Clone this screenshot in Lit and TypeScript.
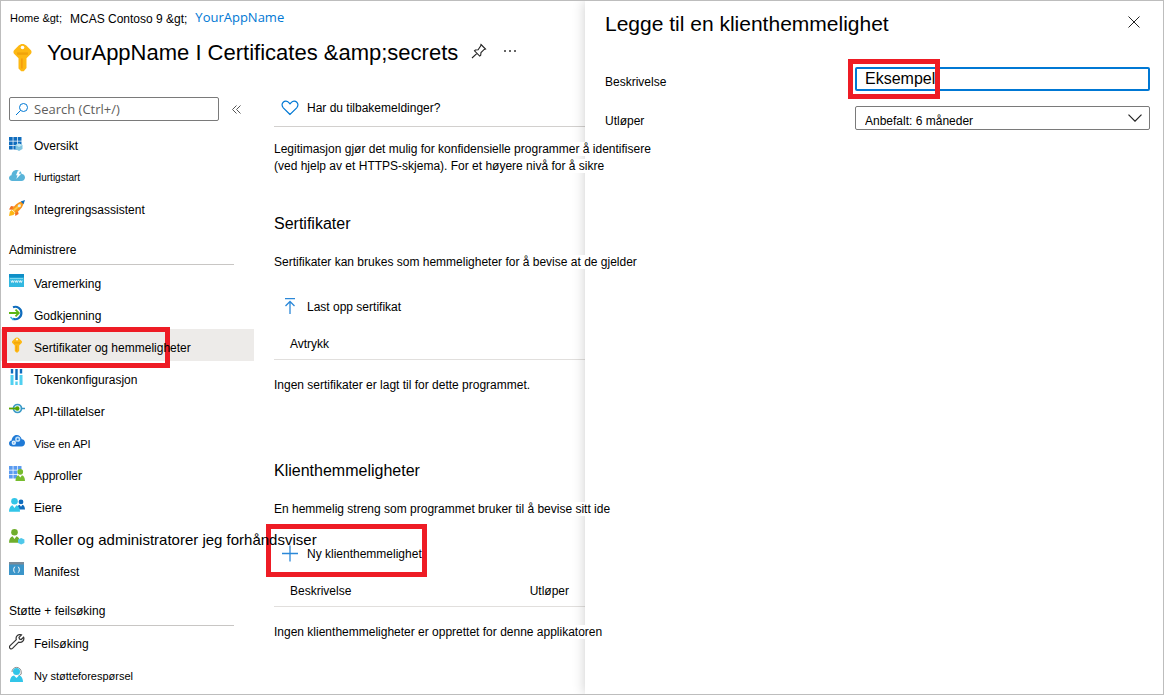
import { LitElement, html, css, svg, nothing, TemplateResult } from "lit";
import { customElement, property } from "lit/decorators.js";

const KEY = svg`
  <path d="M8 .5c.8 0 1.500.3 2.100.9l2.300 2.300c.8.8.8 1.700 0 2.500L10.200 8.400v5.400L8.700 15.600H7.300L5.800 14V8.400L3.600 6.200c-.8-.8-.8-1.700 0-2.500l2.300-2.300C6.500.8 7.200.5 8 .5z" fill="#fdb813"/>
  <path d="M5 5.200h6v1.300H5z" fill="#f0a30a"/>
  <path d="M7.200 8.500h.9v5.500h-.9z" fill="#f59d0e"/>
  <circle cx="8" cy="2.500" r="1" fill="#fff"/>`;

const PERSON = (x: number, y: number, s: number, color: string) => svg`
  <g transform="translate(${x} ${y}) scale(${s})" fill="${color}">
    <circle cx="5" cy="3" r="3"/><path d="M0 12.500C0 9 1.500 6.800 3.200 6.500L5 9l1.800-2.500C8.500 6.800 10 9 10 12.500z"/>
  </g>`;

const GRID = (color: string) => svg`
  <g fill="${color}">
    <path d="M0 1h3.700v3.700H0zM4.400 1h3.700v3.700H4.400zM8.800 1h3.700v3.700H8.800zM0 5.400h3.700v3.700H0zM4.400 5.400h3.700v3.700H4.400zM8.800 5.400h3.700v3.700H8.800zM0 9.800h3.700v3.700H0zM4.400 9.800h3.700v3.700H4.400z"/>
  </g>`;

const ICONS: Record<string, TemplateResult> = {
  overview: svg`${GRID("#0f6cbd")}
    <path d="M10 7.500l3.500 1.600v4L10 15l-3.500-1.900v-4z" fill="#7fc4e0"/>
    <path d="M10 7.500l3.500 1.600L10 11 6.500 9.100z" fill="#c0e6f2"/>`,
  quickstart: svg`
    <path d="M3.300 13C1.400 13 0 11.800 0 10.100c0-1.500 1-2.600 2.500-2.800C2.700 4.200 4.800 2 7.800 2c2.500 0 4.400 1.600 4.900 4 2 .1 3.300 1.700 3.300 3.600S14.500 13 12.500 13z" fill="#59b4d9"/>
    <path d="M9 2.500h2.500L9.800 5.800h2.400L7.300 11l1.200-3.700H7z" fill="#fff"/>`,
  rocket: svg`
    <path d="M5 6.500L2 6 0 9.500l3.500.2zM9 11l.6 3L6.300 16l-.3-3.500z" fill="#f37021"/>
    <path d="M2.500 10L.8 11.800 0 16l4.500-1L6 13z" fill="#fdb813"/>
    <path d="M15 1C10.500 1.500 6.500 3.500 3 9.300l3.700 3.700C12.500 9.500 14.500 5.500 15 1z" fill="#f7941d"/>
    <path d="M4.500 10.800L12 4" stroke="#ffc83d" stroke-width="2"/>
    <path d="M11.700 1.500L16 0l-1.500 4.300z" fill="#0f6cbd"/><circle cx="10.300" cy="5.700" r="1.500" fill="#dff3fb"/>`,
  branding: svg`
    <path d="M0 1h15v13H0z" fill="#32b8e0"/><path d="M0 1h15v3.500H0z" fill="#0f8fc7"/>
    <path d="M1 5h13v.7H1z" fill="#9be4f7"/>
    <path d="M2 7.500l.8 2 .8-2 .8 2 .8-2M6 7.500l.8 2 .8-2 .8 2 .8-2M10 7.500l.8 2 .8-2 .8 2 .8-2" fill="none" stroke="#fff" stroke-width=".8"/>`,
  auth: svg`
    <path d="M4 2.200A6.200 6.200 0 1 1 4 13.800" fill="none" stroke="#0f6cbd" stroke-width="2.200"/>
    <path d="M0 8h9.500M6.500 4.700L9.800 8l-3.300 3.300" fill="none" stroke="#5cb615" stroke-width="1.800"/>
    <path d="M1.500 12l3 3" stroke="#32b8e0" stroke-width="1.500"/>`,
  key: KEY,
  token: svg`
    <path d="M3 6v10M12 6v10" stroke="#50d0f0" stroke-width="3"/>
    <path d="M3 0v4.500M12 0v4.500M7.500 0v11" stroke="#0f6cbd" stroke-width="2.400"/>
    <path d="M7.500 12.500V16" stroke="#50d0f0" stroke-width="2.400"/>`,
  permissions: svg`
    <circle cx="8.500" cy="7.500" r="4" fill="#e8f6fb" stroke="#3999c6" stroke-width="1.700"/>
    <path d="M12.500 7.500H16" stroke="#3999c6" stroke-width="1.500"/>
    <path d="M0 7.500h7" stroke="#57a300" stroke-width="1.800"/><circle cx="8.300" cy="7.500" r="2.200" fill="#57a300"/>`,
  expose: svg`
    <path d="M3.500 13.500C1.500 13.500 0 12.300 0 10.500c0-1.600 1-2.700 2.600-2.900C2.800 4.500 4.900 2 7.700 2c2.500 0 4.300 1.700 5 4.300 2 .1 3.300 1.600 3.300 3.500 0 2.100-1.500 3.700-3.700 3.700z" fill="#1f7ad6"/>
    <circle cx="8.700" cy="6.200" r="1.800" fill="none" stroke="#bfe0fa" stroke-width="1.600"/>
    <circle cx="4.800" cy="9.800" r="1.400" fill="none" stroke="#dff0fd" stroke-width="1.600"/>`,
  approles: svg`${GRID("#5a9bf0")}${PERSON(6.5, 4, 0.95, "#76bc2d")}`,
  owners: svg`${PERSON(8, 2.5, 0.8, "#0f6cbd")}${PERSON(0, 1, 1.1, "#32c5e8")}`,
  roles: svg`${PERSON(0, 0, 1.1, "#6fae2c")}
    <path d="M12.200 9l3.200 1.500v3.400l-3.200 1.700L9 13.900v-3.400z" fill="#50c8ea"/>`,
  manifest: svg`
    <path d="M0 2h15v12H0z" fill="#3b95c9"/><path d="M0 1h15v2.500H0z" fill="#7a8b99"/>
    <path d="M5.800 5.700c-1.500 1.500-1.500 4.500 0 6M9.200 5.700c1.500 1.500 1.500 4.500 0 6" fill="none" stroke="#fff" stroke-width="1"/>`,
  wrench: svg`
    <path d="M14.600 3.200l-2.400 2.300-1.700-.5-.5-1.700 2.400-2.400c-1.700-.6-3.400-.2-4.400 1-1 1.100-1.100 2.400-.7 3.700L.9 11.800c-1.500 1.700.9 4.200 2.600 2.600L9.700 8.200c1.400.4 2.800.2 3.800-.7 1.300-1.200 1.700-2.700 1.100-4.300z" fill="none" stroke="#333" stroke-width="1.200"/>`,
  support: svg`
    <path d="M3 6a4.600 4.600 0 0 1 9.200 0v2.200L9.500 10" fill="none" stroke="#8a8a8a" stroke-width="1"/>
    <circle cx="7.500" cy="5.500" r="3.500" fill="#32c5e8"/><path d="M1 16c0-4 2-6.300 4-6.500L7.500 12l2.500-2.500c2 .2 4 2.500 4 6.500z" fill="#32c5e8"/>`,
};

interface NavItem {
  icon: string;
  label: string;
  size?: string;
  current?: boolean;
}

const TOP: NavItem[] = [
  { icon: "overview", label: "Oversikt" },
  { icon: "quickstart", label: "Hurtigstart", size: "small" },
  { icon: "rocket", label: "Integreringsassistent" },
];
const MANAGE: NavItem[] = [
  { icon: "branding", label: "Varemerking" },
  { icon: "auth", label: "Godkjenning" },
  { icon: "key", label: "Sertifikater og hemmeligheter", current: true },
  { icon: "token", label: "Tokenkonfigurasjon" },
  { icon: "permissions", label: "API-tillatelser" },
  { icon: "expose", label: "Vise en API", size: "compact" },
  { icon: "approles", label: "Approller" },
  { icon: "owners", label: "Eiere" },
  { icon: "roles", label: "Roller og administratorer jeg forhåndsviser", size: "large" },
  { icon: "manifest", label: "Manifest" },
];
const SUPPORT: NavItem[] = [
  { icon: "wrench", label: "Feilsøking" },
  { icon: "support", label: "Ny støtteforespørsel", size: "compact" },
];

@customElement("side-nav")
class SideNav extends LitElement {
  static styles = css`
    :host { display: block; }
    .searchrow { display: flex; margin: 0 0 7px 8px; }
    .search {
      display: flex; align-items: center; gap: 5px; box-sizing: border-box;
      flex: none; height: 24px; padding: 0 5px;
      width: 210px; border: 1px solid #7a7a7a; border-radius: 2px;
    }
    .search svg { width: 14px; height: 14px; flex: none; }
    .search input {
      flex: 1; min-width: 0; border: 0; padding: 0; outline: 0; background: none;
      font: 13px/20px "Open Sans", sans-serif; color: #605e5c;
    }
    .search input::placeholder { color: #605e5c; opacity: 1; }
    .collapse { flex: 1; height: 24px; padding: 0; border: 0; background: none; color: #555; }
    .collapse svg { width: 9px; height: 9px; }
    ul { list-style: none; margin: 0; padding: 0; }
    h3 {
      margin: 0 20px 0 8px; padding: 18px 0 6px; border-bottom: 1px solid #c8c6c4;
      font-size: 12px; line-height: 16px; font-weight: 400;
    }
    li { position: relative; }
    a {
      display: flex; align-items: center; gap: 9px; height: 32px; padding-left: 8px;
      color: #000; text-decoration: none; white-space: nowrap; font-size: 12px; line-height: 16px;
    }
    a.current { background: #edebe9; }
    a svg { width: 16px; height: 16px; flex: none; position: relative; z-index: 2; }
    a span { position: relative; z-index: 3; padding-top: 3px; }
    .manage a span { padding-top: 6px; }
    .small { font-size: 10px; }
    .compact { font-size: 11px; }
    .large { font-size: 15px; }
    .mark {
      position: absolute; left: 1px; top: -2px; width: 168px; height: 41px;
      box-sizing: border-box; border: 5px solid #ee1c25; z-index: 1;
    }
  `;

  private items(list: NavItem[], group = "") {
    return html`<ul class=${group}>
      ${list.map(
        (i) => html`<li>
          <a href="#" class=${i.current ? "current" : ""} aria-current=${i.current ? "page" : nothing}>
            <svg viewBox="0 0 16 16" aria-hidden="true">${ICONS[i.icon]}</svg>
            <span class=${i.size ?? ""}>${i.label}</span>
          </a>
          ${i.current ? html`<div class="mark"></div>` : nothing}
        </li>`
      )}
    </ul>`;
  }

  render() {
    return html`
      <div class="searchrow">
        <label class="search">
          <svg viewBox="0 0 14 14" fill="none" stroke="#0078d4" aria-hidden="true">
            <circle cx="8.500" cy="5.500" r="4" /><path d="M5.500 8.500L1 13" />
          </svg>
          <input type="text" placeholder="Search (Ctrl+/)" aria-label="Search (Ctrl+/)" />
        </label>
        <button class="collapse" aria-label="Skjul meny">
          <svg viewBox="0 0 9 9" fill="none" stroke="currentColor"><path d="M4.500.5l-4 4 4 4M8.500.5l-4 4 4 4" /></svg>
        </button>
      </div>
      <nav>
        ${this.items(TOP)}
        <h3>Administrere</h3>
        ${this.items(MANAGE, "manage")}
        <h3>Støtte + feilsøking</h3>
        ${this.items(SUPPORT)}
      </nav>
    `;
  }
}

@customElement("credential-section")
class CredentialSection extends LitElement {
  @property() heading = "";
  @property() intro = "";
  @property() action = "";
  @property() icon = "";
  @property() empty = "";
  @property({ attribute: false }) columns: string[] = [];
  @property({ type: Boolean }) marked = false;

  static styles = css`
    :host { display: block; }
    h2 { margin: 0; font-size: 16px; line-height: 22px; font-weight: 400; }
    p { margin: 19px 0 20px; font-size: 12px; line-height: 17px; white-space: nowrap; }
    .over { position: relative; z-index: 4; background: #fff; }
    .action { position: relative; }
    button {
      display: flex; align-items: center; gap: 9px; height: 32px; padding: 0 8px; border: 0;
      background: none; font: inherit; font-size: 12px; color: #000; white-space: nowrap;
    }
    button svg { width: 16px; height: 18px; fill: none; stroke: #2b88d8; stroke-width: 1.300; }
    .mark {
      position: absolute; left: -8px; top: -14px; width: 161px; height: 53px;
      box-sizing: border-box; border: 5px solid #ee1c25; z-index: 1;
    }
    table { width: 100%; margin-top: 5px; border-collapse: collapse; font-size: 12px; line-height: 16px; }
    th {
      height: 31px; padding: 0 16px; border-bottom: 1px solid #e1dfdd;
      font-weight: 400; text-align: left;
    }
    th + th { width: 38px; }
    td { height: 50px; padding: 0; max-width: 0; white-space: nowrap; }
  `;

  render() {
    return html`
      <h2>${this.heading}</h2>
      <p><span class="over">${this.intro}</span></p>
      <div class="action">
        <button>
          ${this.icon === "upload"
            ? html`<svg viewBox="0 0 16 18"><path d="M3 .7h10M8 16V3.500M3.500 8L8 3.500 12.500 8" /></svg>`
            : html`<svg viewBox="0 0 16 18"><path d="M0 8.500h16M8 .5v16" /></svg>`}
          ${this.action}
        </button>
        ${this.marked ? html`<div class="mark"></div>` : nothing}
      </div>
      <table>
        <thead><tr>${this.columns.map((c) => html`<th>${c}</th>`)}</tr></thead>
        <tbody><tr><td colspan=${this.columns.length}><span class="over">${this.empty}</span></td></tr></tbody>
      </table>
    `;
  }
}

@customElement("secret-panel")
class SecretPanel extends LitElement {
  static styles = css`
    :host { display: block; background: #fff; padding: 0 13px 0 20px; box-shadow: 0 0 12px rgba(0, 0, 0, 0.2); }
    header { display: flex; align-items: center; justify-content: space-between; height: 44px; }
    h2 { margin: 0; padding-top: 2px; font-size: 21px; line-height: 28px; font-weight: 400; white-space: nowrap; }
    .close { width: 32px; height: 32px; padding: 0; border: 0; background: none; }
    .close svg { width: 12px; height: 12px; }
    form { display: grid; grid-template-columns: 250px minmax(0, 1fr); row-gap: 15px; align-items: center; margin-top: 22px; }
    label { font-size: 12px; line-height: 16px; padding-top: 6px; }
    .field { position: relative; display: flex; }
    input, select {
      width: 100%; height: 24px; box-sizing: border-box; margin: 0; background: #fff; color: #000;
      font-family: inherit; border-radius: 2px; appearance: none; outline: 0;
    }
    input { border: 2px solid #0078d4; padding: 0 8px; font-size: 16px; }
    select { border: 1px solid #7a7a7a; padding: 5px 30px 0 9px; font-size: 12px; line-height: 16px; }
    .chevron { position: absolute; right: 8px; top: 8px; width: 14px; height: 8px; pointer-events: none; }
    .mark {
      position: absolute; left: -7px; top: -8px; width: 92px; height: 40px;
      box-sizing: border-box; border: 5px solid #ee1c25; pointer-events: none;
    }
  `;

  render() {
    return html`
      <header>
        <h2>Legge til en klienthemmelighet</h2>
        <button class="close" aria-label="Lukk">
          <svg viewBox="0 0 12 12" fill="none" stroke="#222"><path d="M.5.5l11 11M11.500.5l-11 11" /></svg>
        </button>
      </header>
      <form>
        <label for="description">Beskrivelse</label>
        <div class="field">
          <input id="description" type="text" .value=${"Eksempel"} />
          <div class="mark"></div>
        </div>
        <label for="expires">Utløper</label>
        <div class="field">
          <select id="expires"><option>Anbefalt: 6 måneder</option></select>
          <svg class="chevron" viewBox="0 0 14 8" fill="none" stroke="#222" stroke-width="1.200"><path d="M.5.7L7 7.200 13.500.7" /></svg>
        </div>
      </form>
    `;
  }
}

@customElement("app-root")
class AppRoot extends LitElement {
  static styles = css`
    :host { display: block; font-family: "Liberation Sans", Arial, sans-serif; color: #000; background: #fff; }
    .frame {
      display: grid; grid-template-columns: minmax(0, 1fr) minmax(0, 578px);
      box-sizing: border-box; min-height: 100vh; border: 1px solid #bdbdbd; overflow: hidden;
    }
    header { padding: 8px 0 0 9px; }
    .crumbs { display: flex; gap: 8px; align-items: center; height: 20px; font-size: 12px; white-space: nowrap; }
    .crumbs a { color: inherit; text-decoration: none; }
    .crumbs .home { font-size: 11px; padding-bottom: 2px; }
    .crumbs .app { font: 13px/16px "Open Sans", sans-serif; color: #0078d4; padding-bottom: 4px; }
    .title { display: flex; align-items: center; height: 48px; }
    .title .key { width: 29px; height: 29px; margin: 8px 10px 0 -2px; flex: none; }
    h1 { margin: 0; font-size: 22px; line-height: 28px; font-weight: 400; white-space: nowrap; }
    .title button { padding: 0 0 5px; border: 0; background: none; height: 20px; display: flex; align-items: center; }
    .title .pin { margin: 0 16px 0 13px; }
    .pin svg { width: 16px; height: 16px; }
    .more svg { width: 14px; height: 4px; }
    .body { display: grid; grid-template-columns: 253px minmax(0, 1fr); column-gap: 20px; }
    side-nav { padding-top: 20px; }
    main { padding-top: 12px; }
    .toolbar { height: 37px; border-bottom: 1px solid #d2d0ce; }
    .feedback {
      display: flex; align-items: center; gap: 8px; height: 38px; padding: 0 7px; border: 0;
      background: none; font: inherit; font-size: 12px; color: #000; white-space: nowrap;
    }
    .feedback svg { width: 18px; height: 16px; }
    .lead { margin: 14px 0 38px; font-size: 12px; line-height: 17px; white-space: nowrap; }
    .lead span { position: relative; z-index: 4; background: #fff; }
    .secrets { margin-top: 50px; }
  `;

  render() {
    return html`
      <div class="frame">
        <div>
          <header>
            <div class="crumbs">
              <a class="home" href="#">Home &amp;gt;</a>
              <a href="#">MCAS Contoso 9 &amp;gt;</a>
              <a class="app" href="#">YourAppName</a>
            </div>
            <div class="title">
              <svg class="key" viewBox="0 0 16 16" aria-hidden="true">${KEY}</svg>
              <h1>YourAppName I Certificates &amp;amp;secrets</h1>
              <button class="pin" aria-label="Fest">
                <svg viewBox="0 0 16 16" fill="none" stroke="#222" stroke-width="1.100">
                  <path d="M10 1.500l4.500 4.500-1.300.4-3.200 3.100-.3 2.700-1 .9-5.200-5.300.9-.8 2.700-.3L9.600 3zM6 10.300L1 15" />
                </svg>
              </button>
              <button class="more" aria-label="Mer">
                <svg viewBox="0 0 14 4" fill="#333"><circle cx="2" cy="2" r="1" /><circle cx="7" cy="2" r="1" /><circle cx="12" cy="2" r="1" /></svg>
              </button>
            </div>
          </header>
          <div class="body">
            <side-nav></side-nav>
            <main>
              <div class="toolbar">
                <button class="feedback">
                  <svg viewBox="0 0 18 16" fill="none" stroke="#0078d4" stroke-width="1.200">
                    <path d="M9 14.500L2.300 7.800C.6 6 .7 3.600 2.200 2.200c1.600-1.500 4-1.300 5.400.2L9 3.900l1.400-1.500c1.400-1.500 3.800-1.700 5.400-.2 1.500 1.400 1.600 3.800-.1 5.600z" />
                  </svg>
                  Har du tilbakemeldinger?
                </button>
              </div>
              <p class="lead">
                <span>Legitimasjon gjør det mulig for konfidensielle programmer å identifisere</span><br />
                <span>(ved hjelp av et HTTPS-skjema). For et høyere nivå for å sikre</span>
              </p>
              <credential-section
                heading="Sertifikater"
                intro="Sertifikater kan brukes som hemmeligheter for å bevise at de gjelder"
                action="Last opp sertifikat"
                icon="upload"
                .columns=${["Avtrykk"]}
                empty="Ingen sertifikater er lagt til for dette programmet."
              ></credential-section>
              <credential-section
                class="secrets"
                heading="Klienthemmeligheter"
                intro="En hemmelig streng som programmet bruker til å bevise sitt ide"
                action="Ny klienthemmelighet"
                icon="add"
                marked
                .columns=${["Beskrivelse", "Utløper"]}
                empty="Ingen klienthemmeligheter er opprettet for denne applikatoren"
              ></credential-section>
            </main>
          </div>
        </div>
        <secret-panel></secret-panel>
      </div>
    `;
  }
}
